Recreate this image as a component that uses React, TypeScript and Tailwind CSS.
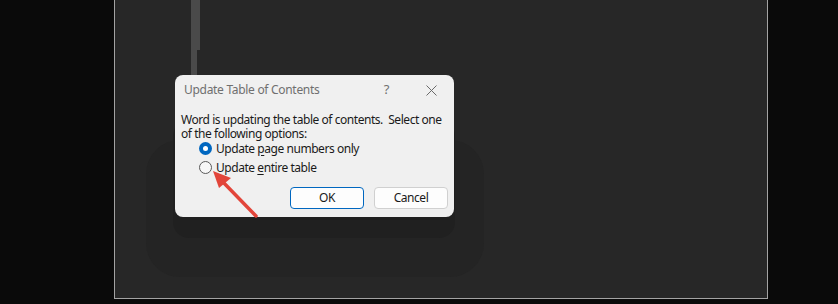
import React from "react";

export default function App() {
  return (
    <div
      className="w-[838px] h-[304px] bg-[#0a0a0a] overflow-hidden"
      style={{ fontFamily: '"Segoe UI", "Noto Sans", "Open Sans", sans-serif' }}
    >
      <div className="relative ml-[114px] w-[654px] h-[299px] pt-[75px] pl-[60px] bg-[#272727] border-l border-r border-b border-[#a3a3a3]">
        {/* dark bar above dialog */}
        <div className="absolute left-[76px] top-0 w-[6px] h-[78px] bg-[#4a4a4a]" />
        <div className="absolute left-[82px] top-0 w-[3px] h-[50px] bg-[#4a4a4a]" />

        {/* soft shadow under the dialog */}
        <div className="absolute left-[31px] top-[140px] w-[338px] h-[137px] rounded-[34px] bg-[#242424]" />
        <div className="absolute left-[58px] top-[120px] w-[282px] h-[118px] rounded-[16px] bg-[#202020]" />

        {/* dialog */}
        <div className="relative w-[279px] h-[142px] rounded-[8px] bg-[#f0f0f0] text-[12px] tracking-[-0.45px] text-[#1a1a1a] whitespace-nowrap">
          <div className="flex items-center h-[30px] pl-[9px] pr-[14px]">
            <span className="text-[#6f6f6f] text-[12px] tracking-[-0.3px]">Update Table of Contents</span>
            <span className="ml-auto mr-[37px] text-[#6f6f6f] text-[13px]">?</span>
            <svg width="11" height="11" viewBox="0 0 11 11" className="mr-[3px]">
              <path d="M0.5 0.5 L10.5 10.5 M10.5 0.5 L0.5 10.5" stroke="#6a6a6a" strokeWidth="1" />
            </svg>
          </div>
          <div className="pl-[6px] pt-[8px] leading-[14px]">
            <div>Word is updating the table of contents.&nbsp; Select one</div>
            <div>of the following options:</div>
          </div>
          <div className="pl-[24px] -mt-[2px] leading-[14px]">
            <div className="flex items-center h-[19px]">
              <span className="w-[13px] h-[13px] rounded-full bg-[#0067c0] flex items-center justify-center">
                <span className="w-[5px] h-[5px] rounded-full bg-white" />
              </span>
              <span className="ml-[4px]">
                Update <span className="underline underline-offset-2">p</span>age numbers only
              </span>
            </div>
            <div className="flex items-center h-[19px]">
              <span className="w-[13px] h-[13px] rounded-full border border-[#5a5a5a] bg-[#f7f7f7]" />
              <span className="ml-[4px]">
                Update <span className="underline underline-offset-2">e</span>ntire table
              </span>
            </div>
          </div>
          <div className="flex justify-end gap-[10px] pr-[6px] pt-[10px]">
            <button className="w-[74px] h-[22px] rounded-[4px] border border-[#0067c0] bg-[#fdfdfd] text-[12px] text-[#1a1a1a]">
              OK
            </button>
            <button className="w-[74px] h-[22px] rounded-[4px] border border-[#d0d0d0] bg-[#fdfdfd] text-[12px] text-[#1a1a1a]">
              Cancel
            </button>
          </div>
        </div>

        {/* red annotation arrow */}
        <svg className="absolute left-0 top-0" width="654" height="299">
          <line x1="141" y1="216" x2="106" y2="180" stroke="#e2453a" strokeWidth="3.5" strokeLinecap="round" />
          <polygon points="98,171 116,178 104,188" fill="#e2453a" />
        </svg>
      </div>
    </div>
  );
}
